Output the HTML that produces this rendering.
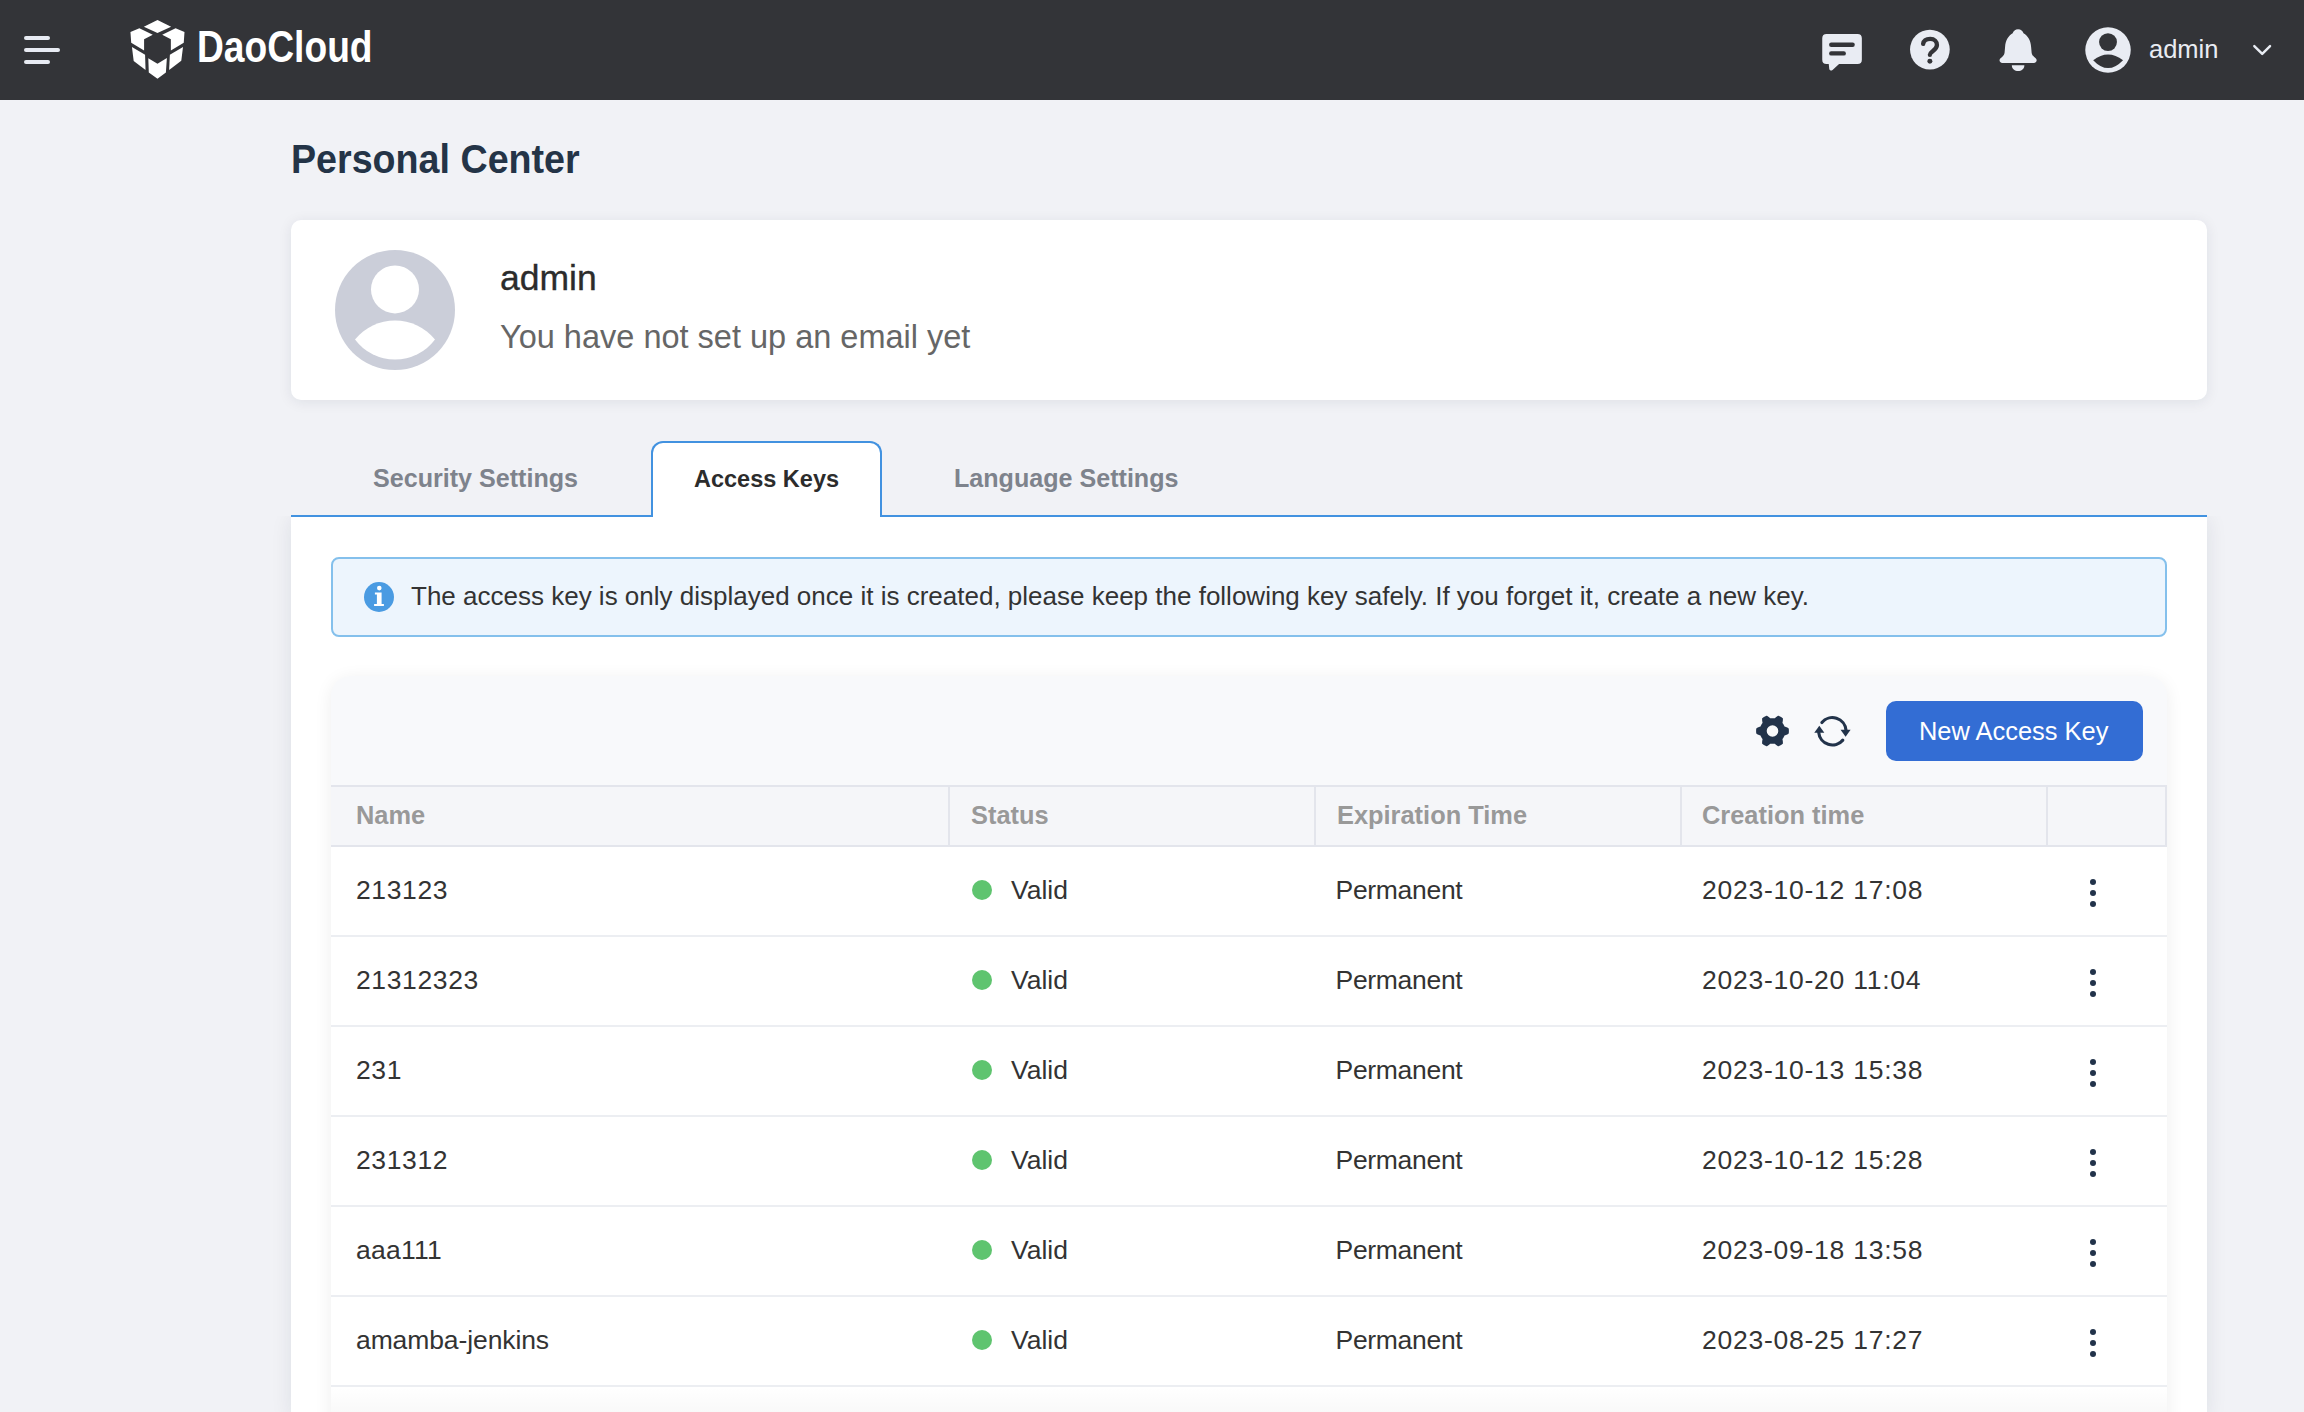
<!DOCTYPE html><html><head><meta charset="utf-8"><style>
*{box-sizing:border-box;margin:0;padding:0}
html,body{width:2304px;height:1412px;overflow:hidden;background:#f1f2f6;font-family:"Liberation Sans",sans-serif}
.t{position:absolute;white-space:nowrap}
.abs{position:absolute}
</style></head><body>
<div class="abs" style="left:0;top:0;width:2304px;height:100px;background:#333438"></div>
<div class="abs" style="left:24px;top:36px;width:26px;height:4px;border-radius:2px;background:#e8ebf3"></div>
<div class="abs" style="left:24px;top:48px;width:36px;height:4px;border-radius:2px;background:#e8ebf3"></div>
<div class="abs" style="left:24px;top:60px;width:26px;height:4px;border-radius:2px;background:#e8ebf3"></div>
<svg class="abs" style="left:125px;top:15px" width="65" height="70" viewBox="0 0 1311 1412"><g fill="#fff">
<polygon points="655,100 930,235 655,365 380,235"/>
<polygon points="110,345 290,265 560,400 385,490 385,715 125,560"/>
<polygon points="1200,345 1020,265 750,400 925,490 925,715 1185,560"/>
<polygon points="140,645 405,800 415,1110 175,930"/>
<polygon points="1170,645 905,800 890,1110 1135,925"/>
<polygon points="470,870 655,985 845,865 825,1160 655,1285 480,1160"/>
</g></svg>
<div class="t" style="left:197.00px;top:24.95px;font-size:44px;line-height:44px;color:#fff;font-weight:700;transform:scaleX(0.845);transform-origin:0 0;letter-spacing:0px">DaoCloud</div>
<svg class="abs" style="left:1800px;top:10px" width="250" height="80" viewBox="0 0 2304 737">
<g fill="#e9ecf3">
<path d="M245,220 H530 Q570,220 570,260 V458 Q570,498 530,498 H360 L300,552 Q280,568 270,545 L265,498 H245 Q205,498 205,458 V260 Q205,220 245,220 Z"/>
<circle cx="1197" cy="365" r="183"/>
<path d="M2010,178 C1985,178 1965,195 1960,215 C1920,240 1895,280 1890,340 L1885,395 C1880,420 1865,430 1848,445 C1830,460 1840,488 1865,488 L2155,488 C2180,488 2190,460 2172,445 C2155,430 2140,420 2135,395 L2130,340 C2125,280 2100,240 2060,215 C2055,195 2035,178 2010,178 Z"/>
<path d="M1952,508 L2068,508 C2068,540 2040,562 2010,562 C1980,562 1952,540 1952,508 Z"/>
</g>
<g stroke="#333438" stroke-width="40" stroke-linecap="round" fill="none">
<line x1="288" y1="320" x2="485" y2="320"/>
<line x1="288" y1="400" x2="403" y2="400"/>
<path d="M1135,312 C1140,282 1165,266 1200,266 C1240,266 1262,292 1262,322 C1262,352 1240,367 1220,382 C1203,395 1197,403 1197,413"/>
</g>
<circle cx="1197" cy="472" r="23" fill="#333438"/>
</svg>
<svg class="abs" style="left:2070px;top:10px" width="234" height="80" viewBox="0 0 2304 788">
<circle cx="374" cy="395" r="224" fill="#e9ecf3"/>
<circle cx="374" cy="316" r="88" fill="#333438"/>
<path d="M228,495 Q374,380 522,495 Q374,650 228,495 Z" fill="#333438"/>
<polyline points="1815,355 1893,433 1970,355" fill="none" stroke="#e9ecf3" stroke-width="24" stroke-linecap="round" stroke-linejoin="round"/>
</svg>
<div class="t" style="left:2149.00px;top:36.81px;font-size:25.5px;line-height:25.5px;color:#e9ecf3;font-weight:400;">admin</div>
<div class="t" style="left:291.00px;top:138.79px;font-size:41px;line-height:41px;color:#243447;font-weight:700;transform:scaleX(0.918);transform-origin:0 0">Personal Center</div>
<div class="abs" style="left:291px;top:220px;width:1916px;height:180px;background:#fff;border-radius:10px;box-shadow:0 2px 14px rgba(20,30,60,0.085)"></div>
<svg class="abs" style="left:335px;top:250px" width="120" height="120" viewBox="0 0 120 120">
<circle cx="60" cy="60" r="60" fill="#cbced9"/>
<circle cx="60" cy="39.4" r="24" fill="#fff"/>
<path d="M20,89.6 A51.6,51.6 0 0 1 100,89.6 A50,50 0 0 1 20,89.6 Z" fill="#fff"/>
</svg>
<div class="t" style="left:500.00px;top:260.94px;font-size:35.5px;line-height:35.5px;color:#2c2c2c;font-weight:400;-webkit-text-stroke:0.35px #2c2c2c">admin</div>
<div class="t" style="left:500.00px;top:321.48px;font-size:32.5px;line-height:32.5px;color:#666;font-weight:400;">You have not set up an email yet</div>
<div class="abs" style="left:291px;top:516px;width:1916px;height:900px;background:#fff;box-shadow:0 2px 20px rgba(20,30,60,0.09);clip-path:inset(0 -40px -40px -40px)"></div>
<div class="abs" style="left:291px;top:515px;width:1916px;height:2px;background:#4292e0"></div>
<div class="abs" style="left:651px;top:441px;width:231px;height:76px;background:#fff;border:2px solid #4292e0;border-bottom:none;border-radius:12px 12px 0 0"></div>
<div class="t" style="left:373.00px;top:466.25px;font-size:25.1px;line-height:25.1px;color:#7e838c;font-weight:700;">Security Settings</div>
<div class="t" style="left:694.00px;top:468.10px;font-size:23.5px;line-height:23.5px;color:#2c2c2c;font-weight:700;">Access Keys</div>
<div class="t" style="left:954.00px;top:466.25px;font-size:25.1px;line-height:25.1px;color:#7e838c;font-weight:700;">Language Settings</div>
<div class="abs" style="left:331px;top:557px;width:1836px;height:80px;background:#edf5fd;border:2px solid #84c0ec;border-radius:8px"></div>
<svg class="abs" style="left:364px;top:582px" width="30" height="30" viewBox="0 0 30 30">
<circle cx="15" cy="15" r="15" fill="#4a9be2"/>
<circle cx="15.3" cy="6.1" r="2.3" fill="#fff"/>
<path d="M10.9,10.6 H17.6 V22.1 H19.9 V24.1 H10.1 V22.1 H12.9 V12.6 H10.9 Z" fill="#fff"/>
</svg>
<div class="t" style="left:411.00px;top:582.89px;font-size:26px;line-height:26px;color:#333;font-weight:400;">The access key is only displayed once it is created, please keep the following key safely. If you forget it, create a new key.</div>
<div class="abs" style="left:331px;top:676px;width:1836px;height:760px;background:#f8f9fb;border-radius:20px 20px 0 0;box-shadow:0 3px 18px rgba(0,0,0,0.07)"></div>
<svg class="abs" style="left:0;top:0" width="2304" height="1412" viewBox="0 0 2304 1412">
<path fill="#22334a" fill-rule="evenodd" d="M1788.90,731.00 L1788.90,730.71 L1788.89,730.43 L1788.88,730.14 L1788.86,729.86 L1788.84,729.57 L1788.81,729.29 L1788.78,729.00 L1788.74,728.72 L1788.70,728.43 L1788.38,728.20 L1788.05,727.98 L1787.71,727.77 L1787.35,727.57 L1786.98,727.39 L1786.60,727.22 L1786.23,727.06 L1785.85,726.92 L1785.49,726.78 L1785.13,726.65 L1784.78,726.53 L1784.45,726.41 L1784.37,726.21 L1784.28,726.00 L1784.19,725.79 L1784.10,725.59 L1784.00,725.39 L1783.90,725.19 L1783.80,724.99 L1783.70,724.79 L1783.59,724.60 L1783.47,724.41 L1783.36,724.22 L1783.23,724.03 L1783.11,723.84 L1782.99,723.66 L1782.86,723.48 L1782.72,723.30 L1782.59,723.12 L1782.45,722.94 L1782.51,722.60 L1782.58,722.24 L1782.65,721.86 L1782.71,721.48 L1782.77,721.08 L1782.82,720.68 L1782.86,720.27 L1782.89,719.86 L1782.90,719.45 L1782.90,719.04 L1782.87,718.64 L1782.82,718.26 L1782.60,718.08 L1782.37,717.90 L1782.14,717.73 L1781.91,717.57 L1781.67,717.40 L1781.43,717.25 L1781.19,717.09 L1780.95,716.94 L1780.70,716.80 L1780.45,716.66 L1780.20,716.52 L1779.95,716.39 L1779.69,716.26 L1779.43,716.14 L1779.17,716.02 L1778.91,715.90 L1778.64,715.79 L1778.38,715.69 L1778.02,715.84 L1777.66,716.02 L1777.30,716.22 L1776.95,716.43 L1776.61,716.66 L1776.28,716.90 L1775.95,717.14 L1775.64,717.39 L1775.34,717.64 L1775.05,717.89 L1774.77,718.13 L1774.50,718.36 L1774.28,718.32 L1774.06,718.30 L1773.84,718.27 L1773.62,718.25 L1773.39,718.23 L1773.17,718.22 L1772.95,718.21 L1772.72,718.20 L1772.50,718.20 L1772.28,718.20 L1772.05,718.21 L1771.83,718.22 L1771.61,718.23 L1771.38,718.25 L1771.16,718.27 L1770.94,718.30 L1770.72,718.32 L1770.50,718.36 L1770.23,718.13 L1769.95,717.89 L1769.66,717.64 L1769.36,717.39 L1769.05,717.14 L1768.72,716.90 L1768.39,716.66 L1768.05,716.43 L1767.70,716.22 L1767.34,716.02 L1766.98,715.84 L1766.62,715.69 L1766.36,715.79 L1766.09,715.90 L1765.83,716.02 L1765.57,716.14 L1765.31,716.26 L1765.05,716.39 L1764.80,716.52 L1764.55,716.66 L1764.30,716.80 L1764.05,716.94 L1763.81,717.09 L1763.57,717.25 L1763.33,717.40 L1763.09,717.57 L1762.86,717.73 L1762.63,717.90 L1762.40,718.08 L1762.18,718.26 L1762.13,718.64 L1762.10,719.04 L1762.10,719.45 L1762.11,719.86 L1762.14,720.27 L1762.18,720.68 L1762.23,721.08 L1762.29,721.48 L1762.35,721.86 L1762.42,722.24 L1762.49,722.60 L1762.55,722.94 L1762.41,723.12 L1762.28,723.30 L1762.14,723.48 L1762.01,723.66 L1761.89,723.84 L1761.77,724.03 L1761.64,724.22 L1761.53,724.41 L1761.41,724.60 L1761.30,724.79 L1761.20,724.99 L1761.10,725.19 L1761.00,725.39 L1760.90,725.59 L1760.81,725.79 L1760.72,726.00 L1760.63,726.21 L1760.55,726.41 L1760.22,726.53 L1759.87,726.65 L1759.51,726.78 L1759.15,726.92 L1758.77,727.06 L1758.40,727.22 L1758.02,727.39 L1757.65,727.57 L1757.29,727.77 L1756.95,727.98 L1756.62,728.20 L1756.30,728.43 L1756.26,728.72 L1756.22,729.00 L1756.19,729.29 L1756.16,729.57 L1756.14,729.86 L1756.12,730.14 L1756.11,730.43 L1756.10,730.71 L1756.10,731.00 L1756.10,731.29 L1756.11,731.57 L1756.12,731.86 L1756.14,732.14 L1756.16,732.43 L1756.19,732.71 L1756.22,733.00 L1756.26,733.28 L1756.30,733.57 L1756.62,733.80 L1756.95,734.02 L1757.29,734.23 L1757.65,734.43 L1758.02,734.61 L1758.40,734.78 L1758.77,734.94 L1759.15,735.08 L1759.51,735.22 L1759.87,735.35 L1760.22,735.47 L1760.55,735.59 L1760.63,735.79 L1760.72,736.00 L1760.81,736.21 L1760.90,736.41 L1761.00,736.61 L1761.10,736.81 L1761.20,737.01 L1761.30,737.21 L1761.41,737.40 L1761.53,737.59 L1761.64,737.78 L1761.77,737.97 L1761.89,738.16 L1762.01,738.34 L1762.14,738.52 L1762.28,738.70 L1762.41,738.88 L1762.55,739.06 L1762.49,739.40 L1762.42,739.76 L1762.35,740.14 L1762.29,740.52 L1762.23,740.92 L1762.18,741.32 L1762.14,741.73 L1762.11,742.14 L1762.10,742.55 L1762.10,742.96 L1762.13,743.36 L1762.18,743.74 L1762.40,743.92 L1762.63,744.10 L1762.86,744.27 L1763.09,744.43 L1763.33,744.60 L1763.57,744.75 L1763.81,744.91 L1764.05,745.06 L1764.30,745.20 L1764.55,745.34 L1764.80,745.48 L1765.05,745.61 L1765.31,745.74 L1765.57,745.86 L1765.83,745.98 L1766.09,746.10 L1766.36,746.21 L1766.62,746.31 L1766.98,746.16 L1767.34,745.98 L1767.70,745.78 L1768.05,745.57 L1768.39,745.34 L1768.72,745.10 L1769.05,744.86 L1769.36,744.61 L1769.66,744.36 L1769.95,744.11 L1770.23,743.87 L1770.50,743.64 L1770.72,743.68 L1770.94,743.70 L1771.16,743.73 L1771.38,743.75 L1771.61,743.77 L1771.83,743.78 L1772.05,743.79 L1772.28,743.80 L1772.50,743.80 L1772.72,743.80 L1772.95,743.79 L1773.17,743.78 L1773.39,743.77 L1773.62,743.75 L1773.84,743.73 L1774.06,743.70 L1774.28,743.68 L1774.50,743.64 L1774.77,743.87 L1775.05,744.11 L1775.34,744.36 L1775.64,744.61 L1775.95,744.86 L1776.28,745.10 L1776.61,745.34 L1776.95,745.57 L1777.30,745.78 L1777.66,745.98 L1778.02,746.16 L1778.38,746.31 L1778.64,746.21 L1778.91,746.10 L1779.17,745.98 L1779.43,745.86 L1779.69,745.74 L1779.95,745.61 L1780.20,745.48 L1780.45,745.34 L1780.70,745.20 L1780.95,745.06 L1781.19,744.91 L1781.43,744.75 L1781.67,744.60 L1781.91,744.43 L1782.14,744.27 L1782.37,744.10 L1782.60,743.92 L1782.82,743.74 L1782.87,743.36 L1782.90,742.96 L1782.90,742.55 L1782.89,742.14 L1782.86,741.73 L1782.82,741.32 L1782.77,740.92 L1782.71,740.52 L1782.65,740.14 L1782.58,739.76 L1782.51,739.40 L1782.45,739.06 L1782.59,738.88 L1782.72,738.70 L1782.86,738.52 L1782.99,738.34 L1783.11,738.16 L1783.23,737.97 L1783.36,737.78 L1783.47,737.59 L1783.59,737.40 L1783.70,737.21 L1783.80,737.01 L1783.90,736.81 L1784.00,736.61 L1784.10,736.41 L1784.19,736.21 L1784.28,736.00 L1784.37,735.79 L1784.45,735.59 L1784.78,735.47 L1785.13,735.35 L1785.49,735.22 L1785.85,735.08 L1786.23,734.94 L1786.60,734.78 L1786.98,734.61 L1787.35,734.43 L1787.71,734.23 L1788.05,734.02 L1788.38,733.80 L1788.70,733.57 L1788.74,733.28 L1788.78,733.00 L1788.81,732.71 L1788.84,732.43 L1788.86,732.14 L1788.88,731.86 L1788.89,731.57 L1788.90,731.29 Z M1778.3,731 A5.8,5.8 0 1 0 1766.7,731 A5.8,5.8 0 1 0 1778.3,731 Z"/>
</svg>
<svg class="abs" style="left:1740px;top:700px" width="140" height="60" viewBox="0 0 2304 987">
<g fill="none" stroke="#22334a" stroke-width="52" stroke-linecap="round">
<path d="M1348,370 A225,225 0 0 1 1744,495"/>
<path d="M1692,660 A225,225 0 0 1 1296,535"/>
</g>
<g fill="#22334a">
<polygon points="1655,490 1820,490 1738,605"/>
<polygon points="1222,540 1388,540 1305,425"/>
</g>
</svg>
<div class="abs" style="left:1886px;top:701px;width:257px;height:60px;background:#336dd4;border-radius:10px"></div>
<div class="t" style="left:1919.00px;top:718.65px;font-size:25.45px;line-height:25.45px;color:#fff;font-weight:400;">New Access Key</div>
<div class="abs" style="left:331px;top:785px;width:1836px;height:62px;background:#f5f6f9;border-top:2px solid #e3e5ec;border-bottom:2px solid #e3e5ec;border-right:2px solid #e3e5ec"></div>
<div class="abs" style="left:948px;top:787px;width:2px;height:58px;background:#e3e5ec"></div>
<div class="abs" style="left:1314px;top:787px;width:2px;height:58px;background:#e3e5ec"></div>
<div class="abs" style="left:1680px;top:787px;width:2px;height:58px;background:#e3e5ec"></div>
<div class="abs" style="left:2046px;top:787px;width:2px;height:58px;background:#e3e5ec"></div>
<div class="t" style="left:356.00px;top:803.49px;font-size:25.4px;line-height:25.4px;color:#999;font-weight:700;">Name</div>
<div class="t" style="left:971.00px;top:803.49px;font-size:25.4px;line-height:25.4px;color:#999;font-weight:700;">Status</div>
<div class="t" style="left:1337.00px;top:803.49px;font-size:25.4px;line-height:25.4px;color:#999;font-weight:700;">Expiration Time</div>
<div class="t" style="left:1702.00px;top:803.49px;font-size:25.4px;line-height:25.4px;color:#999;font-weight:700;">Creation time</div>
<div class="abs" style="left:331px;top:847px;width:1836px;height:90px;background:#fff;border-bottom:2px solid #eceef2"></div>
<div class="t" style="left:356.00px;top:876.56px;font-size:26.5px;line-height:26.5px;color:#333;font-weight:400;letter-spacing:0.62px">213123</div>
<div class="abs" style="left:972px;top:880px;width:20px;height:20px;border-radius:50%;background:#5fc46f"></div>
<div class="t" style="left:1011.00px;top:876.56px;font-size:26.5px;line-height:26.5px;color:#333;font-weight:400;">Valid</div>
<div class="t" style="left:1335.50px;top:876.56px;font-size:26.5px;line-height:26.5px;color:#333;font-weight:400;letter-spacing:-0.3px">Permanent</div>
<div class="t" style="left:1702.00px;top:876.56px;font-size:26.5px;line-height:26.5px;color:#333;font-weight:400;letter-spacing:0.75px">2023-10-12 17:08</div>
<div class="abs" style="left:2090px;top:879px;width:6px;height:6px;border-radius:50%;background:#22334a"></div>
<div class="abs" style="left:2090px;top:890px;width:6px;height:6px;border-radius:50%;background:#22334a"></div>
<div class="abs" style="left:2090px;top:901px;width:6px;height:6px;border-radius:50%;background:#22334a"></div>
<div class="abs" style="left:331px;top:937px;width:1836px;height:90px;background:#fff;border-bottom:2px solid #eceef2"></div>
<div class="t" style="left:356.00px;top:966.56px;font-size:26.5px;line-height:26.5px;color:#333;font-weight:400;letter-spacing:0.62px">21312323</div>
<div class="abs" style="left:972px;top:970px;width:20px;height:20px;border-radius:50%;background:#5fc46f"></div>
<div class="t" style="left:1011.00px;top:966.56px;font-size:26.5px;line-height:26.5px;color:#333;font-weight:400;">Valid</div>
<div class="t" style="left:1335.50px;top:966.56px;font-size:26.5px;line-height:26.5px;color:#333;font-weight:400;letter-spacing:-0.3px">Permanent</div>
<div class="t" style="left:1702.00px;top:966.56px;font-size:26.5px;line-height:26.5px;color:#333;font-weight:400;letter-spacing:0.75px">2023-10-20 11:04</div>
<div class="abs" style="left:2090px;top:969px;width:6px;height:6px;border-radius:50%;background:#22334a"></div>
<div class="abs" style="left:2090px;top:980px;width:6px;height:6px;border-radius:50%;background:#22334a"></div>
<div class="abs" style="left:2090px;top:991px;width:6px;height:6px;border-radius:50%;background:#22334a"></div>
<div class="abs" style="left:331px;top:1027px;width:1836px;height:90px;background:#fff;border-bottom:2px solid #eceef2"></div>
<div class="t" style="left:356.00px;top:1056.56px;font-size:26.5px;line-height:26.5px;color:#333;font-weight:400;letter-spacing:0.62px">231</div>
<div class="abs" style="left:972px;top:1060px;width:20px;height:20px;border-radius:50%;background:#5fc46f"></div>
<div class="t" style="left:1011.00px;top:1056.56px;font-size:26.5px;line-height:26.5px;color:#333;font-weight:400;">Valid</div>
<div class="t" style="left:1335.50px;top:1056.56px;font-size:26.5px;line-height:26.5px;color:#333;font-weight:400;letter-spacing:-0.3px">Permanent</div>
<div class="t" style="left:1702.00px;top:1056.56px;font-size:26.5px;line-height:26.5px;color:#333;font-weight:400;letter-spacing:0.75px">2023-10-13 15:38</div>
<div class="abs" style="left:2090px;top:1059px;width:6px;height:6px;border-radius:50%;background:#22334a"></div>
<div class="abs" style="left:2090px;top:1070px;width:6px;height:6px;border-radius:50%;background:#22334a"></div>
<div class="abs" style="left:2090px;top:1081px;width:6px;height:6px;border-radius:50%;background:#22334a"></div>
<div class="abs" style="left:331px;top:1117px;width:1836px;height:90px;background:#fff;border-bottom:2px solid #eceef2"></div>
<div class="t" style="left:356.00px;top:1146.56px;font-size:26.5px;line-height:26.5px;color:#333;font-weight:400;letter-spacing:0.62px">231312</div>
<div class="abs" style="left:972px;top:1150px;width:20px;height:20px;border-radius:50%;background:#5fc46f"></div>
<div class="t" style="left:1011.00px;top:1146.56px;font-size:26.5px;line-height:26.5px;color:#333;font-weight:400;">Valid</div>
<div class="t" style="left:1335.50px;top:1146.56px;font-size:26.5px;line-height:26.5px;color:#333;font-weight:400;letter-spacing:-0.3px">Permanent</div>
<div class="t" style="left:1702.00px;top:1146.56px;font-size:26.5px;line-height:26.5px;color:#333;font-weight:400;letter-spacing:0.75px">2023-10-12 15:28</div>
<div class="abs" style="left:2090px;top:1149px;width:6px;height:6px;border-radius:50%;background:#22334a"></div>
<div class="abs" style="left:2090px;top:1160px;width:6px;height:6px;border-radius:50%;background:#22334a"></div>
<div class="abs" style="left:2090px;top:1171px;width:6px;height:6px;border-radius:50%;background:#22334a"></div>
<div class="abs" style="left:331px;top:1207px;width:1836px;height:90px;background:#fff;border-bottom:2px solid #eceef2"></div>
<div class="t" style="left:356.00px;top:1236.56px;font-size:26.5px;line-height:26.5px;color:#333;font-weight:400;letter-spacing:0.26px">aaa111</div>
<div class="abs" style="left:972px;top:1240px;width:20px;height:20px;border-radius:50%;background:#5fc46f"></div>
<div class="t" style="left:1011.00px;top:1236.56px;font-size:26.5px;line-height:26.5px;color:#333;font-weight:400;">Valid</div>
<div class="t" style="left:1335.50px;top:1236.56px;font-size:26.5px;line-height:26.5px;color:#333;font-weight:400;letter-spacing:-0.3px">Permanent</div>
<div class="t" style="left:1702.00px;top:1236.56px;font-size:26.5px;line-height:26.5px;color:#333;font-weight:400;letter-spacing:0.75px">2023-09-18 13:58</div>
<div class="abs" style="left:2090px;top:1239px;width:6px;height:6px;border-radius:50%;background:#22334a"></div>
<div class="abs" style="left:2090px;top:1250px;width:6px;height:6px;border-radius:50%;background:#22334a"></div>
<div class="abs" style="left:2090px;top:1261px;width:6px;height:6px;border-radius:50%;background:#22334a"></div>
<div class="abs" style="left:331px;top:1297px;width:1836px;height:90px;background:#fff;border-bottom:2px solid #eceef2"></div>
<div class="t" style="left:356.00px;top:1326.56px;font-size:26.5px;line-height:26.5px;color:#333;font-weight:400;letter-spacing:-0.10px">amamba-jenkins</div>
<div class="abs" style="left:972px;top:1330px;width:20px;height:20px;border-radius:50%;background:#5fc46f"></div>
<div class="t" style="left:1011.00px;top:1326.56px;font-size:26.5px;line-height:26.5px;color:#333;font-weight:400;">Valid</div>
<div class="t" style="left:1335.50px;top:1326.56px;font-size:26.5px;line-height:26.5px;color:#333;font-weight:400;letter-spacing:-0.3px">Permanent</div>
<div class="t" style="left:1702.00px;top:1326.56px;font-size:26.5px;line-height:26.5px;color:#333;font-weight:400;letter-spacing:0.75px">2023-08-25 17:27</div>
<div class="abs" style="left:2090px;top:1329px;width:6px;height:6px;border-radius:50%;background:#22334a"></div>
<div class="abs" style="left:2090px;top:1340px;width:6px;height:6px;border-radius:50%;background:#22334a"></div>
<div class="abs" style="left:2090px;top:1351px;width:6px;height:6px;border-radius:50%;background:#22334a"></div>
<div class="abs" style="left:331px;top:1387px;width:1836px;height:90px;background:#fff;border-bottom:2px solid #eceef2"></div>
<div class="abs" style="left:331px;top:1387px;width:1836px;height:25px;background:linear-gradient(to bottom,rgba(0,0,0,0),rgba(0,0,0,0.025))"></div>
</body></html>
